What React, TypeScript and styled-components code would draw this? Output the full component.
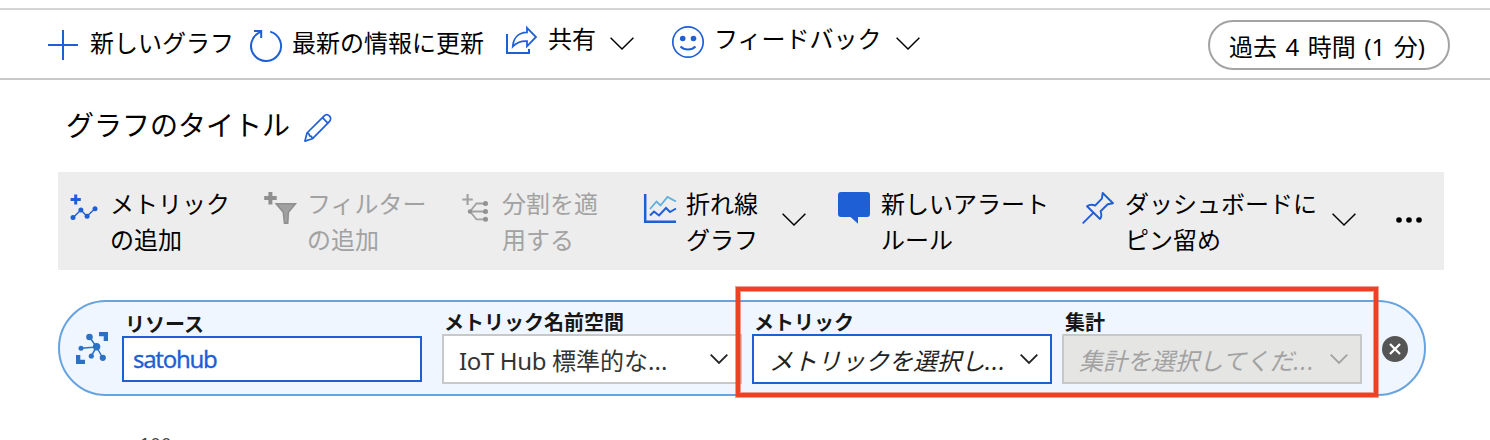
import React from 'react';
import styled, { createGlobalStyle } from 'styled-components';

const BLUE = '#1f5fd6';
const GREY = '#a2a2a2';

const Global = createGlobalStyle`
  * { box-sizing: border-box; }
  html, body { margin: 0; height: 440px; overflow: hidden; }
  body {
    background: #fff;
    color: #000;
    font: 24px/36px 'Noto Sans', 'Noto Sans CJK JP', sans-serif;
  }
  button { font: inherit; color: inherit; background: none; border: 0; padding: 0; }
  svg { display: block; flex: none; overflow: visible; }
`;

const Page = styled.div`
  height: 440px;
  padding-top: 8px;
  display: flex;
  flex-direction: column;
  overflow: hidden;
`;

const CommandBar = styled.header`
  height: 72px;
  flex: none;
  display: flex;
  align-items: flex-start;
  padding: 0 40px 0 48px;
  border-top: 2px solid #d4d4d4;
  border-bottom: 2px solid #c9c9c9;
`;

const Command = styled.button<{ $top: number; $gap: number; $after: number }>`
  display: flex;
  align-items: flex-start;
  white-space: nowrap;
  padding-top: ${p => p.$top}px;
  gap: ${p => p.$gap}px;
  margin-right: ${p => p.$after}px;
`;

const Label = styled.span`
  display: block;
  text-align: left;
`;

const IconSlot = styled.span<{ $shift?: number }>`
  display: block;
  padding-top: ${p => p.$shift ?? 0}px;
`;

const ChevronSlot = styled.span`
  display: block;
  padding: 16px 0 0 4px;
`;

const TimeRange = styled.button`
  width: 242px;
  height: 50px;
  margin: 10px 0 0 auto;
  padding: 3px 0 0 19px;
  border: 2px solid #a3a3a3;
  border-radius: 25px;
  text-align: left;
  white-space: nowrap;
  word-spacing: 2.3px;
`;

const TitleRow = styled.div`
  height: 92px;
  flex: none;
  display: flex;
  align-items: flex-start;
  padding: 26px 0 0 66px;
  gap: 14px;
`;

const Title = styled.h1`
  margin: 0;
  font-size: 28px;
  line-height: 38px;
  font-weight: 400;
  white-space: nowrap;
`;

const ToolBar = styled.nav`
  width: 1386px;
  height: 98px;
  flex: none;
  margin-left: 58px;
  padding: 14px 0 0 12px;
  display: flex;
  align-items: flex-start;
  background: #ededed;
`;

const Tool = styled.button<{ $width: number; $gap: number; $disabled?: boolean }>`
  display: flex;
  align-items: flex-start;
  flex: none;
  white-space: nowrap;
  width: ${p => p.$width}px;
  gap: ${p => p.$gap}px;
  color: ${p => (p.$disabled ? GREY : '#000')};
`;

const ToolChevron = styled.span`
  display: block;
  margin: 27px 0 0 auto;
`;

const ToolSpacer = styled.span`
  width: 32px;
  flex: none;
`;

const More = styled.button`
  margin: 31px 0 0 40px;
`;

const MetricPill = styled.section`
  position: relative;
  width: 1368px;
  height: 96px;
  flex: none;
  margin: 30px 0 0 58px;
  padding: 8px 0 0 16px;
  display: flex;
  align-items: flex-start;
  border: 2px solid #67a3de;
  border-radius: 48px;
  background: #f0f6ff;
`;

const HubSlot = styled.span`
  width: 46px;
  flex: none;
  padding-top: 22px;
`;

const Field = styled.div<{ $top?: number; $after?: number }>`
  width: 300px;
  flex: none;
  padding-top: ${p => p.$top ?? 0}px;
  margin-right: ${p => p.$after ?? 10}px;
`;

const FieldLabel = styled.label<{ $indent: number }>`
  display: block;
  height: 24px;
  padding-left: ${p => p.$indent}px;
  font-size: 20px;
  line-height: 26px;
  font-weight: 700;
  color: #161616;
  white-space: nowrap;
`;

const ResourceInput = styled.div`
  height: 46px;
  padding-left: 9px;
  border: 2px solid ${BLUE};
  background: #fff;
  color: ${BLUE};
  line-height: 42px;
  letter-spacing: -1.3px;
  -webkit-text-stroke: 0.3px ${BLUE};
`;

const Select = styled.div<{ $kind: 'plain' | 'active' | 'disabled' }>`
  display: flex;
  align-items: center;
  justify-content: space-between;
  height: 50px;
  padding: 0 12px 0 15px;
  border: 2px solid ${p => (p.$kind === 'active' ? BLUE : '#c8c8c8')};
  background: ${p => (p.$kind === 'disabled' ? '#e5e5e4' : '#fff')};
  color: ${p => (p.$kind === 'disabled' ? GREY : p.$kind === 'active' ? '#222' : '#333')};
  font-style: ${p => (p.$kind === 'plain' ? 'normal' : 'italic')};
  white-space: nowrap;
`;

const SelectText = styled.span`
  padding-top: 3px;
`;

const Latin = styled.span`
  letter-spacing: -0.35px;
`;

const Dots = styled.span`
  letter-spacing: 0.9px;
`;

const Remove = styled.button`
  margin: 26px 0 0 10px;
`;

const Highlight = styled.div`
  position: absolute;
  left: 676px;
  top: -15px;
  width: 642px;
  height: 110px;
  border: 4px solid #ee4023;
  box-shadow: 0 0 0 1px rgba(238, 64, 35, 0.5), inset 0 0 0 1px rgba(238, 64, 35, 0.5);
`;

const AxisTick = styled.div`
  margin: 37px 0 0 140px;
  font: 18px/24px 'Liberation Sans', sans-serif;
  letter-spacing: 0.6px;
  color: #444;
`;

const Chevron = () => (
  <svg width="24" height="13" fill="none" stroke="#000" strokeWidth="1.500">
    <path d="M.6 .8 12 12 23.400 .8" />
  </svg>
);

const SmallChevron = ({ color = '#222' }: { color?: string }) => (
  <svg width="18" height="10" fill="none" stroke={color} strokeWidth="1.800">
    <path d="M.7 .7 9 9 17.300 .7" />
  </svg>
);

const PlusIcon = () => (
  <svg width="30" height="30" stroke={BLUE} strokeWidth="2">
    <path d="M15 0v30M0 15h30" />
  </svg>
);

const RefreshIcon = () => (
  <svg width="32" height="32" fill="none" stroke={BLUE} strokeWidth="2">
    <path d="M20.200 1.600A15 15 0 1 1 11 1.900M4 1h7.200v7" />
  </svg>
);

const ShareIcon = () => (
  <svg width="32" height="28" fill="none" stroke={BLUE} strokeWidth="2">
    <path d="M1 8v19h22v-4" />
    <path strokeWidth="1.800" d="M21 1.800 30 11l-9 9.300v-5.200C15 14.800 10.500 16.500 6.800 20.500 7.300 12.500 12 6.700 21 6.400Z" />
  </svg>
);

const SmileIcon = () => (
  <svg width="32" height="32" fill="none" stroke={BLUE} strokeWidth="1.700">
    <circle cx="16" cy="16" r="15.200" />
    <path strokeWidth="2" d="M8.500 20.500c4 4 11 4 15 0" />
    <circle cx="10.700" cy="12.500" r="2.800" fill={BLUE} stroke="none" />
    <circle cx="21.500" cy="12.500" r="2.800" fill={BLUE} stroke="none" />
  </svg>
);

const PencilIcon = () => (
  <svg width="28" height="28" fill="none" stroke={BLUE} strokeWidth="1.700" strokeLinejoin="round">
    <path d="M.9 27.100 3 19 20.200 1.900c1.500-1.500 3.700-1.400 5.200 0s1.700 3.900.2 5.400L8.300 24.800Z" />
    <path d="M3 19c1.500.1 2.400.8 2.500 2.800 1.900.1 2.700 1.300 2.800 3M18.500 3.700l5.300 5.400" />
  </svg>
);

const AddMetricIcon = () => (
  <svg width="28" height="27" fill={BLUE} stroke={BLUE}>
    <path fill="none" strokeWidth="3" d="M5.700 .4v10.200M.6 5.600h10.200" />
    <path fill="none" strokeWidth="1.400" d="m3.200 23.500 7.700-7.500 6 6.300 8-7.500" />
    <g stroke="none">
      <circle cx="3" cy="23.600" r="2.500" />
      <circle cx="10.900" cy="16.100" r="2.500" />
      <circle cx="17.100" cy="22.300" r="2.500" />
      <circle cx="25" cy="14.700" r="2.500" />
    </g>
  </svg>
);

const AddFilterIcon = () => (
  <svg width="32" height="32" fill="none" stroke="#8f8f8f">
    <path strokeWidth="4" d="M6.400 0v12.400M.2 6h12.500" />
    <path fill="#a0a0a0" strokeWidth="1.600" d="M12.200 11.700h19.200L24.400 20.200 23.700 31.200h-3.200L19.300 20.200Z" />
  </svg>
);

const SplitIcon = () => (
  <svg width="27" height="28" fill="none" stroke="#a2a2a2" strokeWidth="2">
    <path strokeWidth="2.200" d="M5.600 0v11M.3 5.500h10.500" />
    <path strokeWidth="1.800" d="M8 17.500 14.500 9.500H23M8 17.500h15M8 17.500l6.500 7.800H23" />
    <g stroke="none" fill="#929292">
      <circle cx="8" cy="17.500" r="2.200" />
      <circle cx="23.500" cy="9.500" r="2.500" />
      <circle cx="23.500" cy="17.500" r="2.500" />
      <circle cx="23.500" cy="25.300" r="2.500" />
    </g>
  </svg>
);

const LineChartIcon = () => (
  <svg width="32" height="29" fill="none" stroke={BLUE}>
    <path strokeWidth="2.500" d="M1.200 0v27.700H32" />
    <path stroke="#5fb0dd" strokeWidth="1.800" d="m6 15 6.500-7.500 4 4L23.500 3 32 7.500" />
    <path strokeWidth="2" d="m6 21.500 4-4 5 4 7-7.500 4 4 6-3.500" />
  </svg>
);

const AlertIcon = () => (
  <svg width="32" height="32" fill={BLUE}>
    <path d="M3 0h26a3 3 0 0 1 3 3v19a3 3 0 0 1-3 3H20v6.800L12.500 25H3a3 3 0 0 1-3-3V3a3 3 0 0 1 3-3Z" />
  </svg>
);

const PinIcon = () => (
  <svg width="32" height="32" fill="none" stroke={BLUE} strokeWidth="1.900" strokeLinejoin="round">
    <path d="M20.700 1 31 11.200 25.700 12.300 18.600 19.300C19.500 22 19.700 25 18 27L5 14.200C7.500 12.500 10.500 12.500 13.200 13.500L19.900 6.600ZM11.500 20.700.7 31.400" />
  </svg>
);

const MoreIcon = () => (
  <svg width="26" height="6">
    <circle cx="3" cy="3" r="2.800" />
    <circle cx="13" cy="3" r="2.800" />
    <circle cx="23" cy="3" r="2.800" />
  </svg>
);

const HubIcon = () => (
  <svg width="32" height="32" fill="#2c71c3" stroke="#2c71c3">
    <path stroke="none" d="M23 0h9v9h-4.300V4.300H23ZM0 23h4.300v4.700H9V32H0Z" />
    <path strokeWidth="1.500" d="M20.500 15 13.500 5M20.500 15 5 16.300M20.500 15l-5.200 9M20.500 15l6.300 11" />
    <g stroke="none">
      <circle cx="20.600" cy="14.800" r="3.700" />
      <circle cx="13.500" cy="5" r="3.300" />
      <circle cx="5" cy="16.300" r="2.500" />
      <circle cx="15.300" cy="24" r="2.600" />
      <circle cx="26.800" cy="25.800" r="3.100" />
    </g>
  </svg>
);

const CloseIcon = () => (
  <svg width="26" height="26">
    <circle cx="13" cy="13" r="13" fill="#555" />
    <path d="m8 8 10 10M18 8 8 18" stroke="#fff" strokeWidth="2.300" />
  </svg>
);

export default function App() {
  return (
    <Page>
      <Global />
      <CommandBar>
        <Command $top={15} $gap={12} $after={16}>
          <IconSlot $shift={5}><PlusIcon /></IconSlot>
          <Label>新しいグラフ</Label>
        </Command>
        <Command $top={15} $gap={10} $after={22}>
          <IconSlot $shift={5}><RefreshIcon /></IconSlot>
          <Label>最新の情報に更新</Label>
        </Command>
        <Command $top={11} $gap={10} $after={38}>
          <IconSlot $shift={5}><ShareIcon /></IconSlot>
          <Label>共有</Label>
          <ChevronSlot><Chevron /></ChevronSlot>
        </Command>
        <Command $top={11} $gap={10} $after={0}>
          <IconSlot $shift={5}><SmileIcon /></IconSlot>
          <Label>フィードバック</Label>
          <ChevronSlot><Chevron /></ChevronSlot>
        </Command>
        <TimeRange>過去 4 時間 (1 分)</TimeRange>
      </CommandBar>

      <TitleRow>
        <Title>グラフのタイトル</Title>
        <IconSlot $shift={8}><PencilIcon /></IconSlot>
      </TitleRow>

      <ToolBar>
        <Tool $width={194} $gap={12}>
          <IconSlot $shift={8}><AddMetricIcon /></IconSlot>
          <Label>メトリック<br />の追加</Label>
        </Tool>
        <Tool $width={198} $gap={11} $disabled>
          <IconSlot $shift={6}><AddFilterIcon /></IconSlot>
          <Label>フィルター<br />の追加</Label>
        </Tool>
        <Tool $width={182} $gap={13} $disabled>
          <IconSlot $shift={8}><SplitIcon /></IconSlot>
          <Label>分割を適<br />用する</Label>
        </Tool>
        <Tool $width={162} $gap={10}>
          <IconSlot $shift={8}><LineChartIcon /></IconSlot>
          <Label>折れ線<br />グラフ</Label>
          <ToolChevron><Chevron /></ToolChevron>
        </Tool>
        <ToolSpacer />
        <Tool $width={244} $gap={11}>
          <IconSlot $shift={6}><AlertIcon /></IconSlot>
          <Label>新しいアラート<br />ルール</Label>
        </Tool>
        <Tool $width={274} $gap={11}>
          <IconSlot $shift={6}><PinIcon /></IconSlot>
          <Label>ダッシュボードに<br />ピン留め</Label>
          <ToolChevron><Chevron /></ToolChevron>
        </Tool>
        <More><MoreIcon /></More>
      </ToolBar>

      <MetricPill>
        <HubSlot><HubIcon /></HubSlot>
        <Field $top={2} $after={20}>
          <FieldLabel $indent={3}>リソース</FieldLabel>
          <ResourceInput>satohub</ResourceInput>
        </Field>
        <Field>
          <FieldLabel $indent={2}>メトリック名前空間</FieldLabel>
          <Select $kind="plain">
            <SelectText><Latin>IoT Hub </Latin>標準的な...</SelectText>
            <SmallChevron />
          </Select>
        </Field>
        <Field>
          <FieldLabel $indent={2}>メトリック</FieldLabel>
          <Select $kind="active">
            <SelectText>メトリックを選択し<Dots>...</Dots></SelectText>
            <SmallChevron />
          </Select>
        </Field>
        <Field>
          <FieldLabel $indent={3}>集計</FieldLabel>
          <Select $kind="disabled">
            <SelectText>集計を選択してくだ<Dots>...</Dots></SelectText>
            <SmallChevron color={GREY} />
          </Select>
        </Field>
        <Remove><CloseIcon /></Remove>
        <Highlight />
      </MetricPill>
      <AxisTick>100</AxisTick>
    </Page>
  );
}
